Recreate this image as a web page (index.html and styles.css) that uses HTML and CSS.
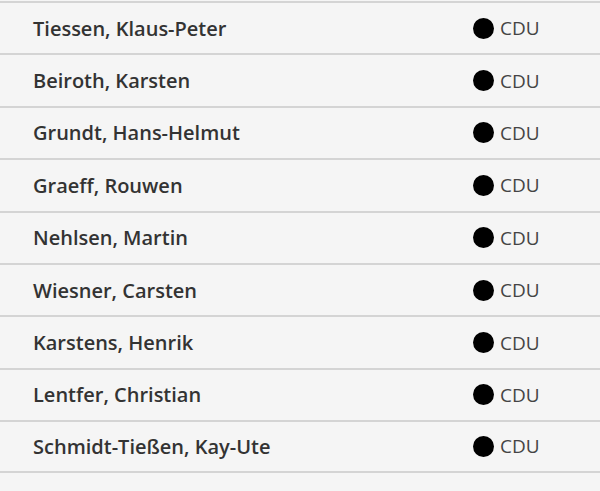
FILE: index.html
```html
<!DOCTYPE html>
<html lang="de">
<head>
<meta charset="utf-8">
<link rel="stylesheet" href="styles.css">
</head>
<body>
<ul class="list">
  <li class="row"><span class="name">Tiessen, Klaus-Peter</span><span class="party"><span class="dot"></span>CDU</span></li>
  <li class="row"><span class="name">Beiroth, Karsten</span><span class="party"><span class="dot"></span>CDU</span></li>
  <li class="row"><span class="name">Grundt, Hans-Helmut</span><span class="party"><span class="dot"></span>CDU</span></li>
  <li class="row"><span class="name">Graeff, Rouwen</span><span class="party"><span class="dot"></span>CDU</span></li>
  <li class="row"><span class="name">Nehlsen, Martin</span><span class="party"><span class="dot"></span>CDU</span></li>
  <li class="row"><span class="name">Wiesner, Carsten</span><span class="party"><span class="dot"></span>CDU</span></li>
  <li class="row"><span class="name">Karstens, Henrik</span><span class="party"><span class="dot"></span>CDU</span></li>
  <li class="row"><span class="name">Lentfer, Christian</span><span class="party"><span class="dot"></span>CDU</span></li>
  <li class="row"><span class="name">Schmidt-Tießen, Kay-Ute</span><span class="party"><span class="dot"></span>CDU</span></li>
</ul>
</body>
</html>
```
FILE: styles.css
```css
html, body {
  margin: 0;
  padding: 0;
  background: #f5f5f5;
}
body {
  font-family: "Open Sans", "Noto Sans", sans-serif;
  color: #333;
}
.list {
  list-style: none;
  margin: 0;
  padding: 1px 0 0;
}
.row {
  display: grid;
  grid-template-columns: 440px auto;
  align-items: center;
  box-sizing: border-box;
  height: 52.4px;
  padding-left: 33px;
  border-top: 2px solid #d4d4d4;
}
.row:last-child {
  border-bottom: 2px solid #d4d4d4;
}
.name {
  font-size: 20px;
  font-weight: 600;
  color: #333;
}
.party {
  display: flex;
  align-items: center;
  gap: 6px;
  font-size: 19px;
  font-weight: 400;
  color: #444;
}
.dot {
  width: 21px;
  height: 21px;
  border-radius: 50%;
  background: #000;
}
```
